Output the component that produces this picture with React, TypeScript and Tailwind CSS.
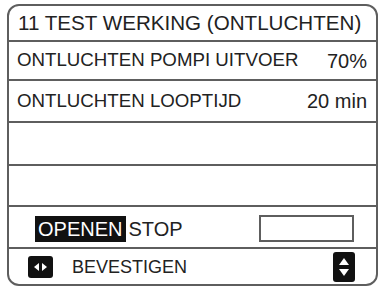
import React from 'react';

const line = 'border-b-2 border-[#5e5e5e]';
const ink = 'leading-none text-[#222] whitespace-nowrap';

function LeftRightIcon() {
  return (
    <svg width="25" height="22" viewBox="0 0 25 22" className="shrink-0">
      <rect x="0" y="0" width="25" height="22" rx="3" fill="#111" />
      <polygon points="6,11 11,7 11,15" fill="#fff" />
      <polygon points="19,11 14,7 14,15" fill="#fff" />
    </svg>
  );
}

function UpDownIcon() {
  return (
    <svg width="22" height="30" viewBox="0 0 22 30" className="shrink-0">
      <rect x="0" y="0" width="22" height="30" rx="3" fill="#111" />
      <polygon points="11,6 6,13 16,13" fill="#fff" />
      <polygon points="11,24 6,17 16,17" fill="#fff" />
    </svg>
  );
}

export default function App() {
  return (
    <div className="w-[382px] h-[290px] bg-white pt-[4px] pl-[7px] font-['Liberation_Sans',Arial,sans-serif]">
      <div className="w-[371px] flex flex-col border-2 border-[#5e5e5e] rounded-[12px] overflow-hidden">
        {/* title */}
        <div className={`h-[36px] ${line} flex items-center pl-[9px] text-[20.6px] ${ink}`}>
          11 TEST WERKING (ONTLUCHTEN)
        </div>
        <div className={`h-[39px] ${line} flex items-center justify-between pl-[8px] pr-[9px] text-[18.7px] ${ink}`}>
          <span>ONTLUCHTEN POMPI UITVOER</span>
          <span className="text-[20px]">70%</span>
        </div>
        <div className={`h-[42px] ${line} flex items-center justify-between pl-[8px] pr-[9px] text-[18.7px] ${ink}`}>
          <span>ONTLUCHTEN LOOPTIJD</span>
          <span className="text-[20px]">20 min</span>
        </div>
        <div className={`h-[43px] ${line}`} />
        <div className={`h-[41px] ${line}`} />
        {/* options */}
        <div className={`h-[42px] ${line} flex items-center pt-[3px] pl-[26px] pr-[22px] ${ink}`}>
          <span className="bg-[#111] text-white text-[20px] pl-[3px] pr-[4px] h-[26px] flex items-center">OPENEN</span>
          <span className="ml-[2px] text-[20px]">STOP</span>
          <div className="ml-auto w-[95px] h-[27px] border-2 border-[#5e5e5e]" />
        </div>
        {/* footer */}
        <div className={`h-[35px] flex items-center pl-[19px] pr-[21px] text-[18px] ${ink}`}>
          <LeftRightIcon />
          <span className="ml-[19px]">BEVESTIGEN</span>
          <div className="ml-auto">
            <UpDownIcon />
          </div>
        </div>
      </div>
    </div>
  );
}
